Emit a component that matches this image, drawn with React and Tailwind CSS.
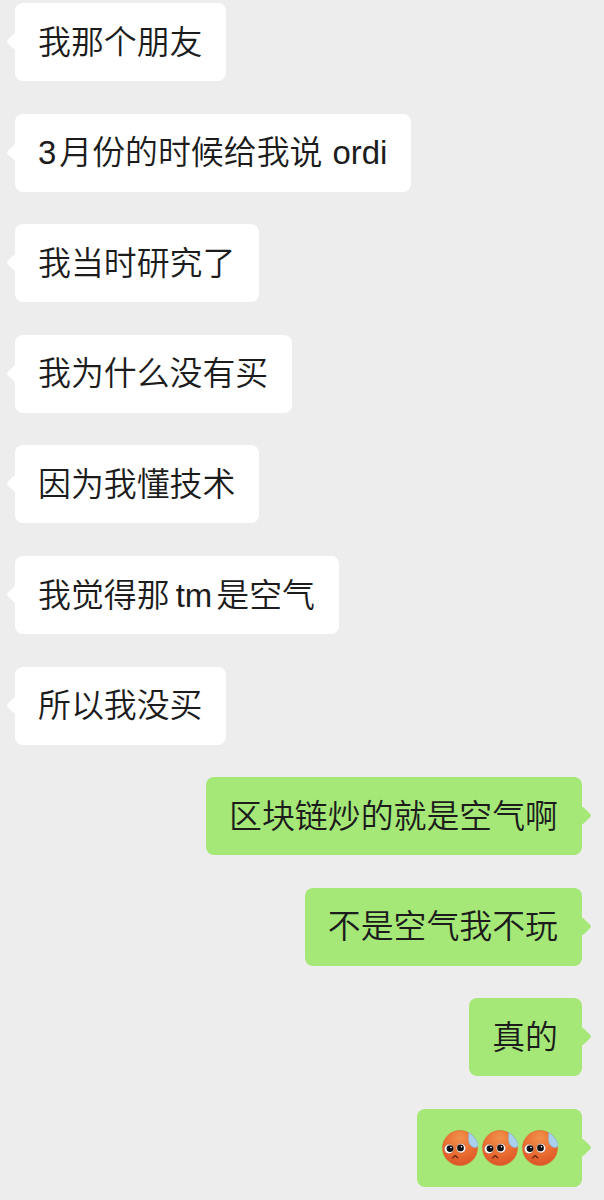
import React from 'react';

const messages = [
  { text: '我那个朋友' },
  { text: <>3<span className="ml-[3px]">月份的时候给我说</span><span className="ml-px"> ordi</span></> },
  { text: '我当时研究了' },
  { text: '我为什么没有买' },
  { text: '因为我懂技术' },
  { text: <>我觉得那<span className="[word-spacing:-3px]"> tm</span><span className="ml-[4px]">是空气</span></> },
  { text: '所以我没买' },
  { text: '区块链炒的就是空气啊', own: true },
  { text: '不是空气我不玩', own: true },
  { text: '真的', own: true },
  { emoji: 3, own: true },
];

// sweating face sticker, wechat style
const SweatFace = ({ id }) => (
  <svg width="36" height="36" viewBox="0 0 36 36">
    <defs>
      <radialGradient id={`face${id}`} cx="50%" cy="22%" r="85%">
        <stop offset="0%" stopColor="#f0914c" />
        <stop offset="55%" stopColor="#e96c30" />
        <stop offset="100%" stopColor="#d94f28" />
      </radialGradient>
    </defs>
    <circle cx="18" cy="18" r="17.500" fill={`url(#face${id})`} stroke="#d9682e" strokeWidth=".6" />
    <path d="M27 2c2.500 3 8 6.500 9 12.500c.3 2-1 3-2.600 3c-3.400 0-6-2.500-6.600-6c-.4-3.200-.3-6.500.2-9.500z" fill="#a9d0ee" stroke="#82b3dc" strokeWidth=".6" />
    <circle cx="7" cy="19" r="4.700" fill="#fff" stroke="#a8431c" strokeWidth=".4" />
    <circle cx="19" cy="18.300" r="4.700" fill="#fff" stroke="#a8431c" strokeWidth=".4" />
    <circle cx="8" cy="18.600" r="3.400" fill="#0f0f14" />
    <circle cx="18.500" cy="17.900" r="3.400" fill="#0f0f14" />
    <circle cx="9" cy="17.500" r=".8" fill="#fff" />
    <circle cx="19.500" cy="16.800" r=".8" fill="#fff" />
    <path d="M10.500 28l2.700-2.500l2.700 2.500" fill="none" stroke="#5e2410" strokeWidth="1.100" strokeLinecap="round" strokeLinejoin="round" />
  </svg>
);

const Bubble = ({ msg, index }) => (
  <div className={`flex ${msg.own ? 'justify-end pr-[22px]' : 'justify-start pl-[15px]'}`}>
    <div className={`relative h-[78px] flex items-center rounded-lg ${msg.emoji ? 'pl-[25px] pr-[24px]' : 'pl-[23px] pr-[24px]'} ${msg.own ? 'bg-[#a5e878]' : 'bg-white'}`}>
      {/* little tail, a rotated square half hidden behind the bubble */}
      <span className={`absolute top-[32px] size-[13px] rotate-45 rounded-[2px] ${msg.own ? '-right-[6.500px] bg-[#a5e878]' : '-left-[6.500px] bg-white'}`} />
      {msg.emoji ? (
        <div className="relative flex gap-1">
          {[0, 1, 2].map((n) => (
            <SweatFace key={n} id={`${index}-${n}`} />
          ))}
        </div>
      ) : (
        <span className="relative pt-[2px] text-[32.9px] leading-none whitespace-pre text-[#1c1c1c] font-[350]">{msg.text}</span>
      )}
    </div>
  </div>
);

export default function App() {
  return (
    <div className="w-[604px] h-[1200px] overflow-hidden bg-[#ededed] pt-[3px] flex flex-col gap-[32.6px] font-['Liberation_Sans','Noto_Sans_CJK_SC',sans-serif]">
      {messages.map((msg, i) => (
        <Bubble key={i} msg={msg} index={i} />
      ))}
    </div>
  );
}
